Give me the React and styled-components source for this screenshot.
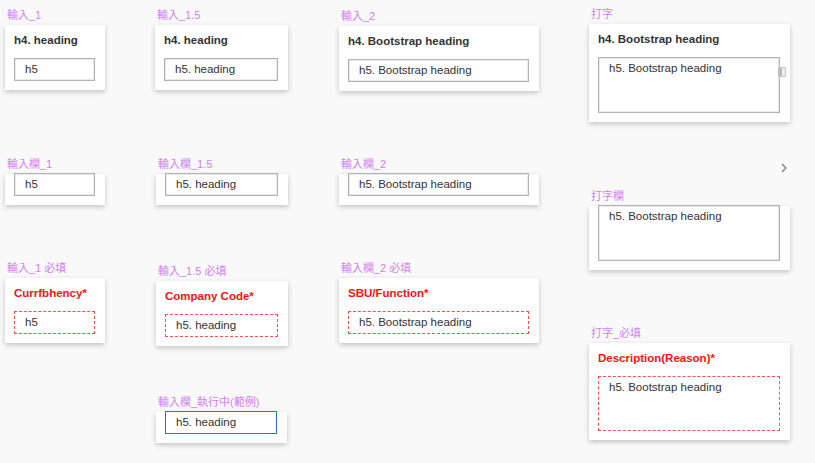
import React from "react";
import styled, { createGlobalStyle } from "styled-components";

const GlobalStyle = createGlobalStyle`
  html, body {
    margin: 0;
    padding: 0;
    background: #f9f9f9;
  }
  body {
    font-family: "Liberation Sans", Arial, "Noto Sans CJK TC", sans-serif;
  }
`;

const specimens = [
  { label: "輸入_1", x: 5, y: 7, w: 100, title: "h4. heading", text: "h5" },
  { label: "輸入_1.5", x: 155, y: 7, w: 133, title: "h4. heading", text: "h5. heading" },
  { label: "輸入_2", x: 339, y: 8, w: 200, title: "h4. Bootstrap heading", text: "h5. Bootstrap heading" },
  { label: "打字", x: 589, y: 6, w: 201, title: "h4. Bootstrap heading", text: "h5. Bootstrap heading", area: true, handle: true },

  { label: "輸入欄_1", x: 5, y: 156, w: 100, text: "h5" },
  { label: "輸入欄_1.5", x: 156, y: 156, w: 132, text: "h5. heading" },
  { label: "輸入欄_2", x: 339, y: 156, w: 200, text: "h5. Bootstrap heading" },
  { label: "打字欄", x: 589, y: 188, w: 201, text: "h5. Bootstrap heading", area: true },

  { label: "輸入_1 必填", x: 5, y: 260, w: 100, title: "Currfbhency*", text: "h5", required: true },
  { label: "輸入_1.5 必填", x: 156, y: 263, w: 132, title: "Company Code*", text: "h5. heading", required: true },
  { label: "輸入欄_2 必填", x: 339, y: 260, w: 200, title: "SBU/Function*", text: "h5. Bootstrap heading", required: true },
  { label: "打字_必填", x: 589, y: 325, w: 201, title: "Description(Reason)*", text: "h5. Bootstrap heading", required: true, area: true, areaHeight: 55 },

  { label: "輸入欄_執行中(範例)", x: 156, y: 394, w: 131, text: "h5. heading", active: true },
];

function App() {
  return (
    <>
      <GlobalStyle />
      <Canvas>
        {specimens.map((s) => (
          <Specimen key={s.label} style={{ left: s.x, top: s.y }}>
            <Label>{s.label}</Label>
            <Card $width={s.w} $bare={!s.title}>
              {s.title && <Title $required={s.required}>{s.title}</Title>}
              <Field
                $area={s.area}
                $areaHeight={s.areaHeight}
                $required={s.required}
                $active={s.active}
                $bare={!s.title}
              >
                {s.text}
                {s.handle && <ResizeHandle />}
              </Field>
            </Card>
          </Specimen>
        ))}
        <Pager>
          <svg width="8" height="10" viewBox="0 0 8 10">
            <polyline points="2,1 6,5 2,9" fill="none" stroke="#777" strokeWidth="1.2" />
          </svg>
        </Pager>
      </Canvas>
    </>
  );
}

const Canvas = styled.div`
  position: relative;
  width: 815px;
  height: 463px;
  overflow: hidden;
  background: #f9f9f9;
`;

const Specimen = styled.div`
  position: absolute;
  display: flex;
  flex-direction: column;
`;

const Label = styled.div`
  height: 16px;
  line-height: 16px;
  margin-bottom: 2px;
  padding-left: 2px;
  font-size: 11px;
  color: #d27ff0;
  white-space: nowrap;
`;

const Card = styled.div`
  box-sizing: border-box;
  width: ${(p) => p.$width}px;
  background: #ffffff;
  box-shadow: 0 2px 5px rgba(0, 0, 0, 0.22);
  padding: ${(p) => (p.$bare ? "0 10px 9px 9px" : "7px 10px 9px 9px")};
  display: flex;
  flex-direction: column;
`;

const Title = styled.div`
  height: 16px;
  line-height: 16px;
  margin-bottom: 10px;
  font-size: 11.5px;
  font-weight: bold;
  color: ${(p) => (p.$required ? "#ff1010" : "#333333")};
  white-space: nowrap;
`;

const Field = styled.div`
  position: relative;
  box-sizing: border-box;
  width: 100%;
  height: ${(p) => (p.$area ? p.$areaHeight || 56 : 23)}px;
  margin-top: ${(p) => (p.$bare ? "-1px" : "0")};
  padding: ${(p) => (p.$area ? "3px 10px 0 10px" : "0 10px")};
  line-height: ${(p) => (p.$area ? "14px" : "21px")};
  font-size: 11.5px;
  color: #333333;
  white-space: nowrap;
  background: #ffffff;
  border: 1px ${(p) => (p.$required ? "dashed" : "solid")}
    ${(p) => (p.$required ? "#ff4d4d" : p.$active ? "#2f74c0" : "#b3b3b3")};
  box-shadow: ${(p) => (p.$required || p.$active ? "none" : "inset 0 0 0 0.5px #d6d6d6")};
`;

const ResizeHandle = styled.div`
  position: absolute;
  right: -7px;
  top: 9px;
  width: 8px;
  height: 10px;
  box-sizing: border-box;
  border: 1px solid #c4c4c4;
  background: linear-gradient(to right, #b9b9b9 0 45%, #ececec 45% 100%);
`;

const Pager = styled.div`
  position: absolute;
  left: 777px;
  top: 161px;
  width: 13px;
  height: 13px;
  background: #ffffff;
  display: flex;
  align-items: center;
  justify-content: center;
`;

export default App;
